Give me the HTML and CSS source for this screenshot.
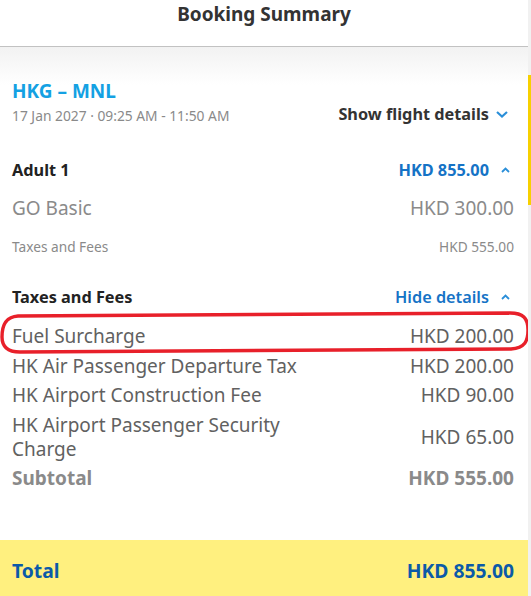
FILE: index.html
```html
<!DOCTYPE html>
<html>
<head>
<meta charset="utf-8">
<link rel="stylesheet" href="styles.css">
</head>
<body>
<div class="page">
  <div class="main">
    <div class="header">Booking Summary</div>
    <div class="flight">
      <div class="route-col">
        <div class="route">HKG – MNL</div>
        <div class="date">17 Jan 2027 · 09:25 AM - 11:50 AM</div>
      </div>
      <div class="show-link">Show flight details<span class="chev"><svg width="12" height="7" viewBox="0 0 12 7"><path d="M1 1 L6 5.5 L11 1" fill="none" stroke="#2b8fd9" stroke-width="2.2"/></svg></span></div>
    </div>

    <div class="fare">
      <div class="row head">
        <span class="label-bold">Adult 1</span>
        <span class="blue-bold">HKD 855.00<span class="chev"><svg class="up" width="9" height="6" viewBox="0 0 9 6"><path d="M1 5 L4.5 1.5 L8 5" fill="none" stroke="#2b8fd9" stroke-width="1.8"/></svg></span></span>
      </div>
      <div class="row basic">
        <span>GO Basic</span>
        <span>HKD 300.00</span>
      </div>
      <div class="row small">
        <span>Taxes and Fees</span>
        <span>HKD 555.00</span>
      </div>

      <div class="row head tax-head">
        <span class="label-bold">Taxes and Fees</span>
        <span class="blue-semi">Hide details<span class="chev"><svg class="up" width="9" height="6" viewBox="0 0 9 6"><path d="M1 5 L4.5 1.5 L8 5" fill="none" stroke="#2b8fd9" stroke-width="1.8"/></svg></span></span>
      </div>
      <div class="items">
        <div class="row item"><span>Fuel Surcharge</span><span class="amt">HKD 200.00</span></div>
        <div class="row item"><span>HK Air Passenger Departure Tax</span><span class="amt">HKD 200.00</span></div>
        <div class="row item"><span>HK Airport Construction Fee</span><span class="amt">HKD 90.00</span></div>
        <div class="row item"><span class="wrap">HK Airport Passenger Security Charge</span><span class="amt">HKD 65.00</span></div>
        <div class="row item subtotal"><span>Subtotal</span><span class="amt">HKD 555.00</span></div>
      </div>
    </div>

    <div class="total">
      <span>Total</span>
      <span>HKD 855.00</span>
    </div>

    <svg class="mark" width="528" height="596" viewBox="0 0 528 596">
      <path d="M18 316 C130 314 300 313 510 313 C523 313 528 318 528 330 C528 341 525 348 511 349 C380 350 200 351 20 352 C7 352 2 346 2 337 C2 326 5 317 18 316 Z" fill="none" stroke="#e8202a" stroke-width="3.4"/>
    </svg>
  </div>
  <div class="scroll"><div class="thumb"></div></div>
</div>
</body>
</html>
```
FILE: styles.css
```css
html, body {
  margin: 0;
  padding: 0;
  background: #fff;
}
body {
  font-family: "Noto Sans", "Open Sans", "DejaVu Sans", sans-serif;
  color: #333;
}
.page {
  display: flex;
  width: 531px;
  height: 596px;
  overflow: hidden;
}
.main {
  position: relative;
  width: 528px;
  flex: none;
}
.scroll {
  width: 3px;
  flex: none;
  background: #f1f1f1;
}
.thumb {
  margin-top: 75px;
  height: 130px;
  width: 3px;
  background: #f7d000;
}
.header {
  height: 47px;
  box-sizing: border-box;
  border-bottom: 1px solid #c2c2c2;
  padding-top: 2px;
  line-height: 24px;
  text-align: center;
  font-size: 19px;
  font-weight: 700;
  color: #333;
}
.flight {
  display: flex;
  justify-content: space-between;
  align-items: flex-end;
  padding: 32px 14px 0 12px;
  background: linear-gradient(#f2f2f2, #ffffff 38px);
}
.route {
  font-size: 19px;
  font-weight: 700;
  line-height: 24px;
  color: #14a1e3;
}
.date {
  margin-top: 3px;
  font-size: 13.8px;
  line-height: 20px;
  color: #8a8a8a;
}
.show-link {
  display: flex;
  align-items: center;
  font-size: 16.3px;
  font-weight: 700;
  line-height: 20px;
  margin-bottom: 2px;
  color: #333;
}
.chev {
  display: inline-flex;
  align-items: center;
  justify-content: center;
  width: 25px;
}
.chev .up {
  margin-left: 7px;
}
.fare {
  padding: 32px 14px 0 12px;
}
.row {
  display: flex;
  justify-content: space-between;
  align-items: center;
}
.head {
  line-height: 24px;
  font-size: 16.3px;
}
.label-bold {
  font-weight: 700;
  color: #222;
}
.blue-bold {
  display: flex;
  align-items: center;
  font-weight: 700;
  color: #1573c6;
}
.blue-semi {
  display: flex;
  align-items: center;
  font-weight: 600;
  color: #1573c6;
}
.basic {
  margin-top: 14px;
  font-size: 19px;
  line-height: 24px;
  color: #8a8a8a;
}
.small {
  margin-top: 17px;
  font-size: 13.7px;
  line-height: 20px;
  color: #8a8a8a;
}
.tax-head {
  margin-top: 28px;
}
.items {
  margin-top: 15px;
  display: flex;
  flex-direction: column;
  gap: 5.5px;
}
.item {
  font-size: 19px;
  line-height: 24px;
  color: #616161;
}
.wrap {
  width: 300px;
}
.amt {
  white-space: nowrap;
}
.subtotal {
  font-weight: 700;
  color: #8a8a8a;
}
.total {
  margin-top: 50px;
  display: flex;
  justify-content: space-between;
  padding: 19px 14px 20px 12px;
  background: #fff07f;
  border-bottom-right-radius: 6px;
  font-size: 19.3px;
  font-weight: 700;
  line-height: 24px;
  color: #0b5aa8;
}
.mark {
  position: absolute;
  left: 0;
  top: 0;
  pointer-events: none;
}
```
